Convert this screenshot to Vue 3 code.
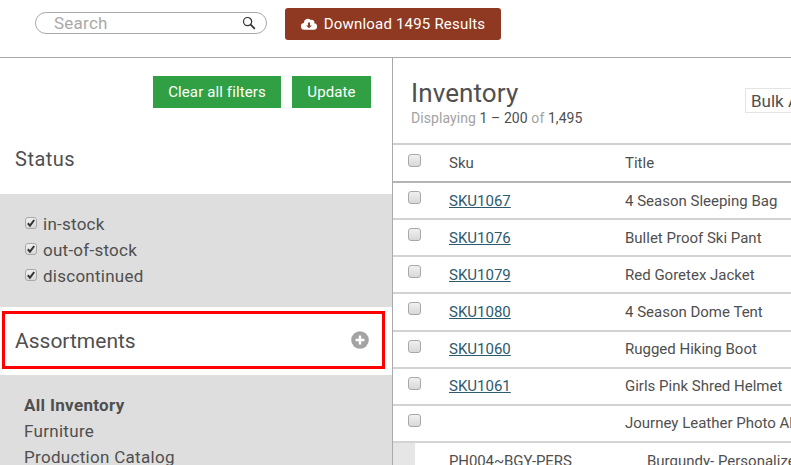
<script setup>
const filters = ['in-stock', 'out-of-stock', 'discontinued']
const rows = [
  { sku: 'SKU1067', title: '4 Season Sleeping Bag' },
  { sku: 'SKU1076', title: 'Bullet Proof Ski Pant' },
  { sku: 'SKU1079', title: 'Red Goretex Jacket' },
  { sku: 'SKU1080', title: '4 Season Dome Tent' },
  { sku: 'SKU1060', title: 'Rugged Hiking Boot' },
  { sku: 'SKU1061', title: 'Girls Pink Shred Helmet' },
  { sku: '', title: 'Journey Leather Photo Album' }
]
</script>

<template>
  <div class="page">
    <header class="top">
      <div class="search">
        <span class="search-text">Search</span>
        <svg class="search-icon" width="14" height="14" viewBox="0 0 14 14" fill="none" stroke="#333">
          <circle cx="5.6" cy="5.6" r="4.1" stroke-width="1.2" />
          <path d="M8.7 8.7 L12.8 12.8" stroke-width="1.8" />
        </svg>
      </div>
      <button class="download">
        <svg width="16" height="12" viewBox="0 0 16 12">
          <path fill="#fff" d="M13.2 5.3A2.6 2.6 0 0 0 9.7 2 3.9 3.9 0 0 0 2.9 4.7v.3A3.4 3.4 0 0 0 3.6 11.8h9a3.2 3.2 0 0 0 .6-6.5z" />
          <path fill="#8f3922" d="M7 4.4h2v3h1.9L8 10.3 5.1 7.4H7z" />
        </svg>
        <span>Download 1495 Results</span>
      </button>
    </header>

    <div class="body">
      <aside class="side">
        <div class="actions">
          <button class="green wide">Clear all filters</button>
          <button class="green">Update</button>
        </div>
        <h2 class="status-title">Status</h2>
        <div class="panel status-panel">
          <label v-for="f in filters" :key="f" class="filter">
            <span class="box small checked">
              <svg width="10" height="10" viewBox="0 0 10 10"><path d="M1.8 5.2 L4 7.6 L8.2 2" fill="none" stroke="#333" stroke-width="2" /></svg>
            </span>
            {{ f }}
          </label>
        </div>
        <div class="assort-wrap">
          <div class="assort">
            <span>Assortments</span>
            <svg width="18" height="18" viewBox="0 0 18 18">
              <circle cx="9" cy="9" r="8.8" fill="#a3a3a3" />
              <path d="M9 4.6v8.8M4.6 9h8.8" stroke="#fff" stroke-width="2.4" />
            </svg>
          </div>
        </div>
        <div class="panel list-panel">
          <div class="strong">All Inventory</div>
          <div>Furniture</div>
          <div>Production Catalog</div>
        </div>
      </aside>

      <main class="main">
        <div class="head">
          <div class="head-text">
            <h1>Inventory</h1>
            <p class="count"><span class="faint">Displaying</span> 1 – 200 <span class="faint">of</span> 1,495</p>
          </div>
          <div class="bulk">Bulk Actions</div>
        </div>
        <div class="table">
          <div class="row head-row">
            <span class="box"></span>
            <span class="sku">Sku</span>
            <span class="title">Title</span>
          </div>
          <div v-for="r in rows" :key="r.title" class="row">
            <span class="box"></span>
            <a class="sku link">{{ r.sku }}</a>
            <span class="title">{{ r.title }}</span>
          </div>
          <div class="sub-row">
            <span class="sub-gutter"></span>
            <span class="sub-sku">PH004~BGY-PERS</span>
            <span class="sub-title">Burgundy- Personalized</span>
          </div>
        </div>
      </main>
    </div>
  </div>
</template>

<style>
html, body { margin: 0; overflow: hidden; background: #fff; }
</style>

<style scoped>
.page {
  width: 791px;
  height: 465px;
  overflow: hidden;
  font-family: Roboto, sans-serif;
  color: #4f4f4f;
  background: #fff;
}
.top {
  height: 57px;
  border-bottom: 1px solid #aaa;
  display: flex;
  align-items: flex-start;
}
.search {
  margin: 12px 0 0 35px;
  width: 232px;
  height: 22px;
  box-sizing: border-box;
  border: 1px solid #aaa;
  border-radius: 11px;
  display: flex;
  align-items: center;
  justify-content: space-between;
  padding: 0 10px 0 18px;
}
.search-text { font-size: 17px; color: #a9a9a9; letter-spacing: 0.25px; }
.search-icon { margin-top: -1px; }
.download {
  margin: 8px 0 0 18px;
  width: 216px;
  height: 32px;
  border: 0;
  border-radius: 3px;
  background: #8f3922;
  color: #fff;
  font: 15px Roboto, sans-serif;
  letter-spacing: 0.2px;
  display: flex;
  align-items: center;
  justify-content: center;
  gap: 7px;
  padding: 0;
}
.body { display: flex; height: 407px; }
.side {
  width: 392px;
  flex: none;
  border-right: 1px solid #aaa;
}
.actions {
  display: flex;
  justify-content: flex-end;
  gap: 11px;
  padding: 18px 21px 0 0;
}
.green {
  width: 79px;
  height: 32px;
  border: 0;
  background: #319f43;
  color: #fff;
  font: 15px Roboto, sans-serif;
  letter-spacing: 0.12px;
  padding: 0;
}
.green.wide { width: 128px; }
.status-title {
  margin: 0;
  padding: 0 15px;
  height: 86px;
  line-height: 102px;
  font-size: 20px;
  font-weight: 400;
  letter-spacing: 0.5px;
}
.panel { background: #dedede; font-size: 17px; color: #4f4f4f; }
.status-panel { height: 113px; padding: 17px 0 0 25px; box-sizing: border-box; letter-spacing: 0.25px; }
.filter { display: flex; align-items: center; height: 26px; gap: 6px; }
.filter .box { margin-top: -3px; }
.assort-wrap { padding: 4px 7px 6px 2px; }
.assort {
  height: 58px;
  box-sizing: border-box;
  border: 3px solid #f00;
  display: flex;
  align-items: center;
  justify-content: space-between;
  padding: 2px 13px 0 10px;
  font-size: 21px;
}
.assort svg { margin-top: -2px; }
.list-panel { height: 120px; padding: 17px 0 0 24px; box-sizing: border-box; line-height: 26px; letter-spacing: 0.3px; }
.strong { font-weight: 700; letter-spacing: 0.32px; }
.main { flex: 1; min-width: 0; overflow: hidden; }
.head {
  height: 85px;
  box-sizing: border-box;
  padding: 18px 0 0 18px;
  display: flex;
  white-space: nowrap;
}
.head-text { width: 334px; flex: none; }
h1 { margin: 0; font-size: 26px; line-height: 34px; font-weight: 400; letter-spacing: 0.1px; }
.count { margin: -1px 0 0; font-size: 14px; line-height: 18px; letter-spacing: 0.08px; }
.faint { color: #a3a3a3; }
.bulk {
  margin: 12px 0 0 0;
  width: 80px;
  height: 25px;
  flex: none;
  box-sizing: border-box;
  border: 1px solid #e4e4e4;
  padding-left: 5px;
  font-size: 17px;
  line-height: 25px;
}
.table { border-top: 2px solid #d0d0d0; }
.row {
  height: 37.15px;
  box-sizing: border-box;
  border-bottom: 2px solid #d3d3d3;
  display: flex;
  align-items: center;
  font-size: 15px;
  padding-left: 15px;
  white-space: nowrap;
}
.head-row { height: 38px; border-bottom: 2px solid #b5b5b5; }
.row .box { margin-top: -6px; }
.sku { width: 176px; margin-left: 28px; flex: none; }
.link { color: #2d5a6e; text-decoration: underline; }
.box {
  display: inline-flex;
  align-items: center;
  justify-content: center;
  width: 13px;
  height: 13px;
  box-sizing: border-box;
  flex: none;
  border: 1px solid #a8a8a8;
  border-radius: 3px;
  background: linear-gradient(#f0f0f0, #d8d8d8);
}
.box.small { width: 12px; height: 12px; }
.sub-row { display: flex; height: 30px; font-size: 15px; white-space: nowrap; }
.sub-gutter { width: 22px; background: #e6e6e6; flex: none; }
.sub-sku { width: 198px; margin-left: 34px; flex: none; padding-top: 9px; letter-spacing: -0.1px; }
.sub-title { padding-top: 9px; }
</style>
